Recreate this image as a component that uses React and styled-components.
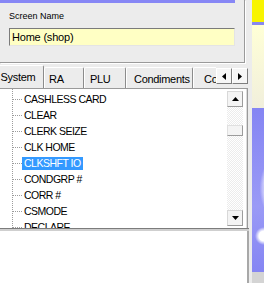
import React from 'react';
import styled, { createGlobalStyle } from 'styled-components';

const GlobalStyle = createGlobalStyle`
  html, body {
    margin: 0;
    padding: 0;
    background: #ececec;
  }
  body {
    font-family: "Liberation Sans", Arial, sans-serif;
    color: #000;
  }
`;

const Screen = styled.div`
  display: flex;
  width: 264px;
  height: 283px;
  overflow: hidden;
  background: #ececec;
`;

const Main = styled.div`
  width: 252px;
  display: flex;
  flex-direction: column;
`;

const Header = styled.div`
  width: 244px;
  height: 62px;
  border-right: 1px solid #9a9a9a;
  border-bottom: 1px solid #9a9a9a;
  box-shadow: 1px 1px 0 #fff;
  margin-bottom: 1px;
`;

const TopStrip = styled.div`
  width: 235px;
  height: 3px;
  background: #8787f5;
`;

const FieldLabel = styled.div`
  margin: 8px 0 0 9px;
  font-size: 9px;
  line-height: 11px;
`;

const TextField = styled.div`
  margin: 6px 0 0 9px;
  width: 222px;
  height: 15px;
  padding: 1px 0 0 2px;
  background: #ffffc4;
  border-top: 1px solid #7b7b7b;
  border-left: 1px solid #7b7b7b;
  border-right: 1px solid #e4e4e4;
  border-bottom: 1px solid #e4e4e4;
  font-size: 11px;
  line-height: 15px;
  letter-spacing: -0.2px;
`;

const TabStrip = styled.div`
  display: flex;
  width: 248px;
  height: 24px;
`;

const TabTrack = styled.div`
  flex: 1;
  display: flex;
  align-items: flex-end;
  overflow: hidden;
  margin-left: -8px;
`;

const Tab = styled.div`
  flex: none;
  box-sizing: border-box;
  width: ${p => p.$width}px;
  height: ${p => (p.$active ? 23 : 21)}px;
  padding: 5px 0 0 ${p => p.$pad}px;
  border-top: 1px solid #fff;
  border-left: 1px solid #fff;
  border-right: 1px solid #8c8c8c;
  border-top-left-radius: 2px;
  border-top-right-radius: 2px;
  background: #ececec;
  font-size: 11px;
  line-height: 13px;
  letter-spacing: -0.3px;
  white-space: nowrap;
  text-align: ${p => (p.$active ? 'center' : 'left')};
`;

const TabArrows = styled.div`
  flex: none;
  display: flex;
  margin-top: 4px;
  height: 16px;
`;

const ArrowButton = styled.div`
  box-sizing: border-box;
  width: 16px;
  height: 16px;
  display: flex;
  align-items: center;
  justify-content: center;
  background: #f6f6f6;
  border-top: 1px solid #fff;
  border-left: 1px solid #fff;
  border-right: 1px solid #7e7e7e;
  border-bottom: 1px solid #7e7e7e;
`;

const ListPanel = styled.div`
  display: flex;
  width: 247px;
  height: 139px;
  background: #fff;
  border-top: 1px solid #9a9a9a;
  border-right: 1px solid #9a9a9a;
  box-shadow: inset -1px 0 0 #dcdcdc;
  overflow: hidden;
`;

const Tree = styled.ul`
  flex: 1;
  list-style: none;
  margin: 0 0 0 12px;
  padding: 2px 0 0;
  border-left: 1px dotted #9c9c9c;
`;

const TreeRow = styled.li`
  display: flex;
  align-items: center;
  height: 16px;
`;

const Connector = styled.span`
  width: 9px;
  border-top: 1px dotted #9c9c9c;
`;

const NodeLabel = styled.span`
  padding: 0 2px;
  height: 13px;
  font-size: 10.5px;
  line-height: 13px;
  letter-spacing: -0.5px;
  white-space: nowrap;
  background: ${p => (p.$selected ? '#3399ff' : 'transparent')};
  color: ${p => (p.$selected ? '#fff' : '#000')};
`;

const ScrollBar = styled.div`
  flex: none;
  width: 16px;
  margin: 2px 4px 2px 0;
  display: flex;
  flex-direction: column;
`;

const ScrollButton = styled.div`
  box-sizing: border-box;
  height: 16px;
  display: flex;
  align-items: center;
  justify-content: center;
  background: #f4f4f4;
  border: 1px solid #d8d8d8;
  border-right-color: #9c9c9c;
  border-bottom-color: #9c9c9c;
`;

const Track = styled.div`
  flex: 1;
  background: repeating-conic-gradient(#ececec 0 25%, #fff 0 50%) 0 0 / 2px 2px;
`;

const Thumb = styled.div`
  box-sizing: border-box;
  height: 11px;
  background: #f4f4f4;
  border: 1px solid #e0e0e0;
  border-right-color: #9c9c9c;
  border-bottom-color: #9c9c9c;
`;

const Splitter = styled.div`
  width: 249px;
  height: 2px;
  border-top: 1px solid #7c7c7c;
  background: #cfcfcf;
`;

const BottomPanel = styled.div`
  flex: 1;
  width: 247px;
  background: #fff;
  border-right: 2px solid #a8a8a8;
`;

const Side = styled.div`
  width: 12px;
  display: flex;
  flex-direction: column;
`;

const Band = styled.div`
  height: ${p => p.$h}px;
  flex: ${p => (p.$grow ? 1 : 'none')};
  background: ${p => p.$bg};
`;

const tabs = [
  { label: 'System', width: 52, pad: 0, active: true },
  { label: 'RA', width: 40, pad: 4 },
  { label: 'PLU', width: 42, pad: 5 },
  { label: 'Condiments', width: 67, pad: 7 },
  { label: 'Configuration', width: 80, pad: 10 },
];

const nodes = [
  'CASHLESS CARD',
  'CLEAR',
  'CLERK SEIZE',
  'CLK HOME',
  'CLKSHFT IO',
  'CONDGRP #',
  'CORR #',
  'CSMODE',
  'DECLARE',
];

const Triangle = ({ dir }) => {
  const pts = {
    up: '0,4 7,4 3.5,0',
    down: '0,0 7,0 3.5,4',
    left: '4,0 4,7 0,3.5',
    right: '0,0 0,7 4,3.5',
  }[dir];
  const vertical = dir === 'up' || dir === 'down';
  return (
    <svg width={vertical ? 7 : 4} height={vertical ? 4 : 7} viewBox={vertical ? '0 0 7 4' : '0 0 4 7'}>
      <polygon points={pts} fill="#000" />
    </svg>
  );
};

export default function App() {
  return (
    <>
      <GlobalStyle />
      <Screen>
        <Main>
          <Header>
            <TopStrip />
            <FieldLabel>Screen Name</FieldLabel>
            <TextField>Home (shop)</TextField>
          </Header>
          <TabStrip>
            <TabTrack>
              {tabs.map(t => (
                <Tab key={t.label} $width={t.width} $pad={t.pad} $active={t.active}>
                  {t.label}
                </Tab>
              ))}
            </TabTrack>
            <TabArrows>
              <ArrowButton><Triangle dir="left" /></ArrowButton>
              <ArrowButton><Triangle dir="right" /></ArrowButton>
            </TabArrows>
          </TabStrip>
          <ListPanel>
            <Tree>
              {nodes.map(n => (
                <TreeRow key={n}>
                  <Connector />
                  <NodeLabel $selected={n === 'CLKSHFT IO'}>{n}</NodeLabel>
                </TreeRow>
              ))}
            </Tree>
            <ScrollBar>
              <ScrollButton><Triangle dir="up" /></ScrollButton>
              <Track>
                <Thumb style={{ marginTop: 18 }} />
              </Track>
              <ScrollButton><Triangle dir="down" /></ScrollButton>
            </ScrollBar>
          </ListPanel>
          <Splitter />
          <BottomPanel />
        </Main>
        <Side>
          <Band $h={22} $bg="#f8f400" />
          <Band $h={3} $bg="#8888f0" />
          <Band $h={83} $bg="linear-gradient(#ffffd6, #f1efdc)" />
          <Band
            $h={164}
            $bg="radial-gradient(ellipse 9px 9px at 12px 128px, #ffffff 0 55%, transparent 100%), radial-gradient(ellipse 26px 40px at 30px 80px, transparent 0 62%, #c9c9fb 72%, transparent 86%), linear-gradient(#8585f3, #9a9af6 60%, #8585f3)"
          />
          <Band $grow $bg="#d4d4d4" />
        </Side>
      </Screen>
    </>
  );
}
